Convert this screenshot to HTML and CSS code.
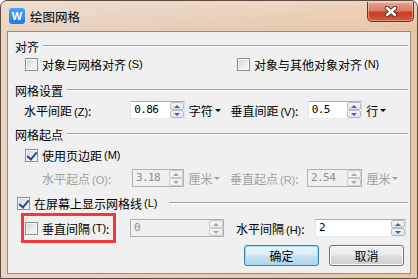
FILE: index.html
```html
<!DOCTYPE html>
<html lang="zh-CN">
<head>
    <meta charset="UTF-8">
    <title>绘图网格</title>
    <link rel="stylesheet" href="styles.css">
</head>
<body>
    <div class="window">
        <div class="titlebar">
            <span class="app-icon">W</span>
            <span class="title">绘图网格</span>
            <button class="close-btn">
                <svg width="16" height="11" viewBox="0 0 16 11">
                    <path d="M4 2 L12 9 M12 2 L4 9" stroke="#5b2a1e" stroke-width="4.4" stroke-linecap="round"/>
                    <path d="M4 2 L12 9 M12 2 L4 9" stroke="#fff" stroke-width="2.6" stroke-linecap="round"/>
                </svg>
            </button>
        </div>
        <div class="client">
            <div class="group-head"><span>对齐</span></div>
            <div class="row row-align">
                <label class="check col-first"><span class="box"></span>对象与网格对齐<span class="key">(S)</span></label>
                <label class="check"><span class="box"></span>对象与其他对象对齐<span class="key">(N)</span></label>
            </div>

            <div class="group-head gap8"><span>网格设置</span></div>
            <div class="row row-spacing">
                <span class="lbl lbl-a">水平间距<span class="key">(Z)</span>:</span>
                <div class="spin w55"><span class="val">0.86</span><span class="arrows"><i class="up"></i><i class="down"></i></span></div>
                <span class="unit drop">字符</span>
                <span class="lbl lbl-b">垂直间距<span class="key">(V)</span>:</span>
                <div class="spin w55"><span class="val">0.5</span><span class="arrows"><i class="up"></i><i class="down"></i></span></div>
                <span class="unit drop">行</span>
            </div>

            <div class="group-head gap4"><span>网格起点</span></div>
            <div class="row row-margin">
                <label class="check"><span class="box on"></span>使用页边距<span class="key">(M)</span></label>
            </div>
            <div class="row row-origin disabled">
                <span class="lbl lbl-c">水平起点<span class="key">(O)</span>:</span>
                <div class="spin w53 off"><span class="val">3.18</span><span class="arrows"><i class="up"></i><i class="down"></i></span></div>
                <span class="unit drop">厘米</span>
                <span class="lbl lbl-b">垂直起点<span class="key">(R)</span>:</span>
                <div class="spin w56 off"><span class="val">2.54</span><span class="arrows"><i class="up"></i><i class="down"></i></span></div>
                <span class="unit drop">厘米</span>
            </div>

            <div class="group-head check-head"><label class="check"><span class="box on"></span>在屏幕上显示网格线<span class="key">(L)</span></label></div>
            <div class="row row-interval">
                <div class="highlight">
                    <label class="check"><span class="box"></span>垂直间隔<span class="key">(T)</span>:</label>
                </div>
                <div class="spin w94 off"><span class="val">0</span><span class="arrows"><i class="up"></i><i class="down"></i></span></div>
                <span class="lbl lbl-d">水平间隔<span class="key">(H)</span>:</span>
                <div class="spin w91"><span class="val">2</span><span class="arrows"><i class="up"></i><i class="down"></i></span></div>
            </div>

            <div class="actions">
                <button class="btn default">确定</button>
                <button class="btn">取消</button>
            </div>
        </div>
    </div>
</body>
</html>
```

FILE: styles.css
```css
* { margin: 0; padding: 0; box-sizing: border-box; }

body {
    width: 418px;
    height: 279px;
    overflow: hidden;
    font-family: "Noto Sans CJK SC", "Noto Sans", sans-serif;
    font-size: 12px;
    color: #000;
    background: #fff;
}

/* window frame */
.window {
    width: 418px;
    height: 279px;
    display: flex;
    flex-direction: column;
    padding: 0 6px 4px 6px;
    border: 1px solid #5e4c40;
    border-radius: 7px 7px 0 0;
    background:
        linear-gradient(180deg, rgba(255,255,255,0.25) 0%, rgba(255,255,255,0) 30px),
        linear-gradient(90deg, #e9d4c3 0%, #e6ccb6 45%, #e9c5a4 100%);
}

.titlebar {
    height: 30px;
    display: flex;
    align-items: center;
}

.app-icon {
    flex: none;
    display: block;
    width: 16px;
    height: 16px;
    margin-left: 2px;
    border-radius: 3px;
    background: linear-gradient(180deg, #4aa6f6, #1f7ee6);
    color: #fff;
    font: bold 11px "Liberation Sans", sans-serif;
    line-height: 16px;
    text-align: center;
}

.title {
    margin-left: 5px;
    font-size: 12.5px;
    color: #000;
}

.close-btn {
    margin-left: auto;
    margin-right: -3px;
    align-self: flex-start;
    margin-top: 1px;
    width: 47px;
    height: 20px;
    border: 1px solid #6e3426;
    border-top: none;
    border-radius: 0 0 5px 5px;
    background: linear-gradient(180deg, #e8a594 0%, #dc7a62 45%, #c83e20 55%, #d25a38 100%);
    box-shadow: inset 0 0 0 1px rgba(255,255,255,0.35);
    display: flex;
    align-items: center;
    justify-content: center;
}

/* dialog body */
.client {
    flex: 1;
    display: flex;
    flex-direction: column;
    padding: 6px 2px 0 0;
    background: #f0f0f0;
    border: 1px solid #8c8c8c;
}

.group-head {
    height: 16px;
    display: flex;
    align-items: center;
    padding-left: 7px;
}
.group-head::after {
    content: "";
    flex: 1;
    margin-left: 4px;
    border-top: 1px solid #a0a0a0;
    border-bottom: 1px solid #fff;
}
.gap8 { margin-top: 8px; }
.gap4 { margin-top: 4px; }
.check-head {
    height: 20px;
    margin-top: 5px;
    padding-left: 9px;
}
.check-head::after { margin-left: 12px; }

.row {
    display: flex;
    align-items: center;
}
.row-align { height: 20px; padding-left: 17px; }
.row-spacing { height: 24px; padding-left: 16px; }
.row-margin { height: 26px; padding-left: 17px; }
.row-origin { height: 20px; padding-left: 34px; }
.row-interval { height: 30px; padding-left: 13px; }

.disabled { color: #a0a0a0; }

.col-first { width: 212px; }

.check {
    display: flex;
    align-items: center;
    white-space: nowrap;
}
.box {
    flex: none;
    width: 13px;
    height: 13px;
    margin-right: 4px;
    border: 1px solid #8e8f8f;
    background: linear-gradient(135deg, #cfd2d6 0%, #eceef0 60%, #f8f8f8 100%);
    box-shadow: inset 0 0 0 1px #f6f6f6;
    position: relative;
}
.box.on::after {
    content: "";
    position: absolute;
    left: 3px;
    top: 0px;
    width: 4px;
    height: 8px;
    border-right: 2px solid #2c4a8f;
    border-bottom: 2px solid #2c4a8f;
    transform: rotate(40deg);
}

.key {
    font-family: "Liberation Sans", sans-serif;
    font-size: 11px;
    margin-left: 2px;
}

.lbl { white-space: nowrap; }
.lbl-a { width: 107px; }
.lbl-b { width: 78px; }
.lbl-c { width: 91px; }
.lbl-d { width: 79px; margin-left: 12px; }

.unit {
    width: 46px;
    padding-left: 4px;
    display: flex;
    align-items: center;
}
.drop::after {
    content: "";
    margin-left: 2px;
    border-left: 3px solid transparent;
    border-right: 3px solid transparent;
    border-top: 3px solid currentColor;
}

/* spin boxes */
.spin {
    height: 18px;
    display: flex;
    background: #fff;
    border: 1px solid #abadb3;
    border-left-color: #e2e3ea;
    border-right-color: #dbdfe6;
    border-bottom-color: #e3e9ef;
}
.w53 { width: 53px; }
.w55 { width: 55px; }
.w56 { width: 56px; }
.w91 { width: 91px; }
.w94 { width: 94px; margin-left: 14px; }

.val {
    flex: 1;
    padding-left: 3px;
    font: 11px "DejaVu Sans Mono", monospace;
    letter-spacing: -0.6px;
    line-height: 16px;
}

.arrows {
    width: 14px;
    display: flex;
    flex-direction: column;
}
.arrows i {
    flex: 1;
    display: flex;
    align-items: center;
    justify-content: center;
    border: 1px solid #b7bcc3;
    border-radius: 2px;
    background: linear-gradient(180deg, #f4f6f9, #dde3ea);
}
.arrows i::after {
    content: "";
    border-left: 3px solid transparent;
    border-right: 3px solid transparent;
}
.arrows .up::after { border-bottom: 3px solid #4a6390; }
.arrows .down::after { border-top: 3px solid #4a6390; }

.spin.off {
    background: #f0f0f0;
    border-color: #adb2b5;
    color: #8d8d8d;
}
.spin.off .arrows i {
    border-color: #c9c9c9;
    background: #f2f2f2;
}
.spin.off .arrows .up::after { border-bottom-color: #a6a6a6; }
.spin.off .arrows .down::after { border-top-color: #a6a6a6; }

.highlight {
    width: 95px;
    height: 30px;
    display: flex;
    align-items: center;
    padding-left: 1px;
    border: 3px solid #f03a3a;
}

/* buttons */
.actions {
    margin-top: 2px;
    display: flex;
    justify-content: flex-end;
    gap: 10px;
    padding-right: 4px;
}
.btn {
    width: 75px;
    height: 21px;
    border: 1px solid #707070;
    border-radius: 3px;
    font: 12px "Noto Sans CJK SC", sans-serif;
    color: #000;
    background: linear-gradient(180deg, #f2f2f2 0%, #ebebeb 48%, #dddddd 52%, #cfcfcf 100%);
    box-shadow: inset 0 0 0 1px #fcfcfc;
}
.btn.default {
    border-color: #3c7fb1;
    background: linear-gradient(180deg, #eaf4fa 0%, #dcecf6 48%, #c6e0f1 52%, #b4d4ea 100%);
    box-shadow: inset 0 0 0 1px #9fdcf9;
}
```
